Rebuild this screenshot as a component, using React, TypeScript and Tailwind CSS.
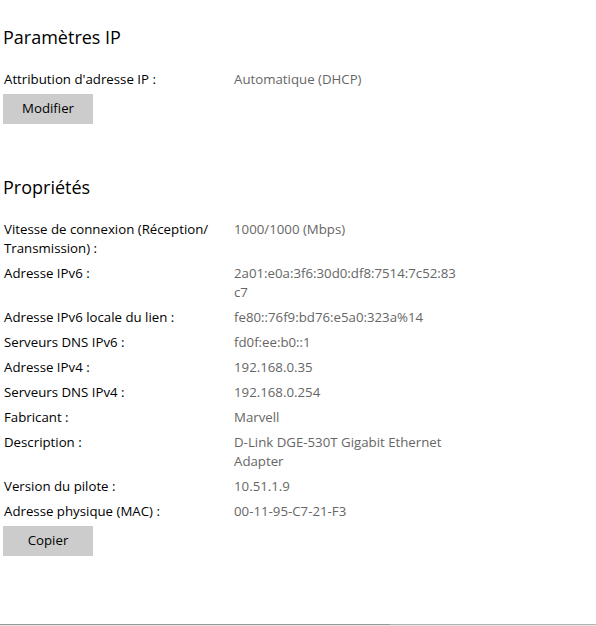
const rows: { label: React.ReactNode; value: React.ReactNode }[] = [
  {
    label: (
      <>
        Vitesse de connexion (Réception/
        <br />
        Transmission) :
      </>
    ),
    value: '1000/1000 (Mbps)',
  },
  {
    label: 'Adresse IPv6 :',
    value: (
      <>
        2a01:e0a:3f6:30d0:df8:7514:7c52:83
        <br />
        c7
      </>
    ),
  },
  { label: 'Adresse IPv6 locale du lien :', value: 'fe80::76f9:bd76:e5a0:323a%14' },
  { label: 'Serveurs DNS IPv6 :', value: 'fd0f:ee:b0::1' },
  { label: 'Adresse IPv4 :', value: '192.168.0.35' },
  { label: 'Serveurs DNS IPv4 :', value: '192.168.0.254' },
  { label: 'Fabricant :', value: 'Marvell' },
  {
    label: 'Description :',
    value: (
      <>
        D-Link DGE-530T Gigabit Ethernet
        <br />
        Adapter
      </>
    ),
  },
  { label: 'Version du pilote :', value: '10.51.1.9' },
  { label: 'Adresse physique (MAC) :', value: '00-11-95-C7-21-F3' },
]

function Row({ label, value }: { label: React.ReactNode; value: React.ReactNode }) {
  return (
    <div className="flex leading-[19px]">
      <div className="w-[231px] shrink-0 pl-[1px] text-black">{label}</div>
      <div className="text-[#666666]">{value}</div>
    </div>
  )
}

function GrayButton({ children }: { children: React.ReactNode }) {
  return (
    <button className="w-[90px] h-[30px] bg-[#cccccc] text-black text-[13.25px] flex items-center justify-center">
      {children}
    </button>
  )
}

export default function App() {
  return (
    <div
      className="h-[626px] w-[596px] bg-white flex flex-col text-[13.25px] overflow-hidden"
      style={{ fontFamily: '"Open Sans", "Noto Sans", sans-serif' }}
    >
      <div className="pl-[3px] pt-[23px] flex flex-col">
        {/* IP settings */}
        <h2 className="text-[18px] leading-[28px] text-black">Paramètres IP</h2>
        <div className="mt-[19px]">
          <Row label="Attribution d'adresse IP :" value="Automatique (DHCP)" />
        </div>
        <div className="mt-[5px]">
          <GrayButton>Modifier</GrayButton>
        </div>

        {/* Properties */}
        <h2 className="mt-[49px] text-[18px] leading-[28px] text-black">Propriétés</h2>
        <div className="mt-[19px] flex flex-col gap-[6px]">
          {rows.map((r, i) => (
            <Row key={i} label={r.label} value={r.value} />
          ))}
        </div>
        <div className="mt-[5px]">
          <GrayButton>Copier</GrayButton>
        </div>
      </div>

      {/* horizontal scrollbar track */}
      <div className="mt-auto flex flex-col">
        <div className="flex h-[1px]">
          <div className="w-[390px] bg-[#999999]" />
          <div className="flex-1 bg-[#b3b3b3]" />
        </div>
        <div className="h-[1px] bg-[#e3e3e3]" />
      </div>
    </div>
  )
}
